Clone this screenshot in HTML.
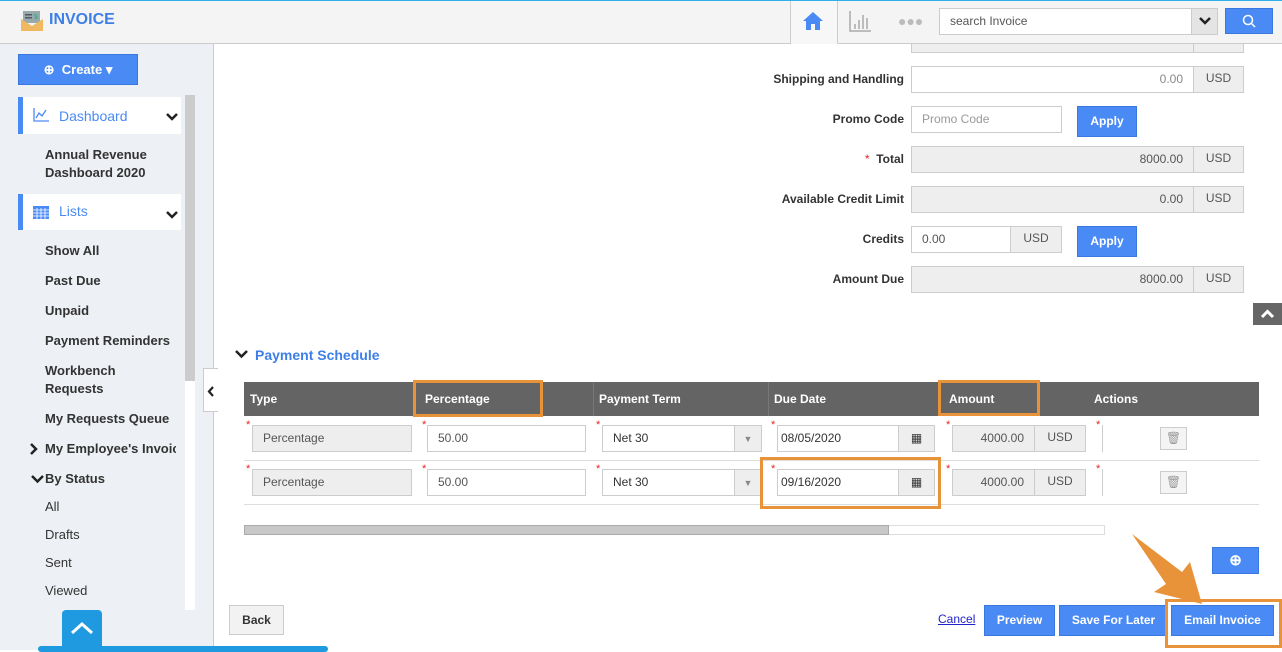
<!DOCTYPE html>
<html><head><meta charset="utf-8"><style>
*{box-sizing:border-box;margin:0;padding:0}
body{width:1282px;height:650px;overflow:hidden;position:relative;background:#fff;font-family:"Liberation Sans",Arial,sans-serif;font-size:13px;color:#333}
.a{position:absolute}
.lbl{position:absolute;right:378px;font-weight:bold;font-size:12px;color:#333;text-align:right}
.inp{position:absolute;border:1px solid #ccc;background:#fff;height:27px;font-size:12px;color:#555;line-height:25px;padding:0 10px}
.ro{background:#eee}
.add{position:absolute;border:1px solid #ccc;background:#eee;height:27px;font-size:12px;color:#555;line-height:23px;text-align:center}
.btn{position:absolute;background:#4a8af4;border:1px solid #3a78e0;color:#fff;font-weight:bold;font-size:12px;text-align:center}
.nav{position:absolute;left:45px;font-weight:bold;font-size:13px;color:#333}
.nav2{position:absolute;left:45px;font-size:13px;color:#333}
.th{position:absolute;top:391px;color:#fff;font-weight:bold;font-size:12px}
.star{position:absolute;color:#e22;font-size:11px}
.ob{position:absolute;border:3px solid #e8923a}
</style></head><body>
<!-- form top partial -->
<div class="inp ro" style="left:911px;top:40px;width:283px;height:13px;border-top:none"></div>
<div class="add" style="left:1193px;top:40px;width:51px;height:13px;border-top:none"></div>
<!-- top bar -->
<div class="a" style="left:0;top:0;width:1282px;height:44px;background:#f4f4f4;border-top:1px solid #2eb0e8;border-bottom:1px solid #ccc"></div>
<svg class="a" style="left:21px;top:10px" width="22" height="22" viewBox="0 0 22 22"><rect x="2" y="1" width="17" height="12" fill="#9aa"/><rect x="4" y="4" width="7" height="1.5" fill="#556"/><rect x="4" y="7" width="7" height="1.5" fill="#556"/><text x="13" y="9" font-size="7" fill="#2a8">$</text><path d="M0 9 L11 16 L22 9 V21 H0Z" fill="#f0b860"/></svg>
<div class="a" style="left:49px;top:11px;font-size:16px;font-weight:bold;color:#3d7fe6">INVOICE</div>
<div class="a" style="left:790px;top:1px;width:48px;height:43px;border-left:1px solid #ccc;border-right:1px solid #ccc;background:#f7f7f7"></div>
<svg class="a" style="left:802px;top:10px" width="22" height="22" viewBox="0 0 22 22"><path d="M11 2 L1 11 H4 V20 H9 V14 H13 V20 H18 V11 H21Z" fill="#4a8af4"/></svg>
<svg class="a" style="left:849px;top:10px" width="22" height="22" viewBox="0 0 22 22" stroke="#aaa" stroke-width="1.5" fill="none"><path d="M1 1V21H22M6 14V19M10 10V19M14 5V19M18 8V19"/></svg>
<div class="a" style="left:898px;top:13px;color:#bbb;font-size:14px;letter-spacing:0px">●●●</div>
<div class="a" style="left:939px;top:8px;width:279px;height:27px;border:1px solid #ccc;background:#fff;font-size:12px;color:#555;line-height:25px;padding-left:10px">search Invoice</div>
<div class="a" style="left:1191px;top:8px;width:27px;height:27px;border:1px solid #ccc;background:#e4e4e4"></div>
<svg class="a" style="left:1199px;top:17px" width="12" height="9" viewBox="0 0 12 9"><path d="M1 1 L6 6 L11 1" stroke="#222" stroke-width="2.5" fill="none"/></svg>
<div class="a" style="left:1225px;top:8px;width:48px;height:26px;background:#4a8af4;border:1px solid #3a78e0"></div>
<svg class="a" style="left:1242px;top:14px" width="14" height="14" viewBox="0 0 14 14" stroke="#fff" stroke-width="1.5" fill="none"><circle cx="6" cy="6" r="4.5"/><path d="M9 9L13 13"/></svg>
<!-- sidebar -->
<div class="a" style="left:0;top:44px;width:214px;height:606px;background:#edf0f4;border-right:1px solid #ccc"></div>
<div class="btn" style="left:18px;top:54px;width:120px;height:31px;line-height:29px;font-size:13px">⊕&nbsp; Create ▾</div>
<div class="a" style="left:185px;top:95px;width:10px;height:515px;background:#fff"></div>
<div class="a" style="left:185px;top:95px;width:10px;height:286px;background:#ccc"></div>
<div class="a" style="left:18px;top:97px;width:163px;height:37px;background:#fff;border-left:5px solid #4a8af4"></div>
<svg class="a" style="left:33px;top:108px" width="16" height="14" viewBox="0 0 16 14" stroke="#4a8af4" fill="none" stroke-width="1.3"><path d="M1 0V13H16M3 10L6 5L9 8L13 2"/></svg>
<div class="a" style="left:59px;top:108px;color:#4a8af4;font-size:14px">Dashboard</div>
<svg class="a" style="left:166px;top:113px" width="12" height="9" viewBox="0 0 12 9"><path d="M1 1 L6 6 L11 1" stroke="#222" stroke-width="2.5" fill="none"/></svg>
<div class="nav" style="top:146px;line-height:18px">Annual Revenue<br>Dashboard 2020</div>
<div class="a" style="left:18px;top:194px;width:163px;height:36px;background:#fff;border-left:5px solid #4a8af4"></div>
<svg class="a" style="left:33px;top:206px" width="16" height="13" viewBox="0 0 16 13"><rect width="16" height="13" fill="#4a8af4"/><path d="M0 4H16M0 7H16M0 10H16M4 2V13M8 2V13M12 2V13" stroke="#fff" stroke-width=".8"/></svg>
<div class="a" style="left:59px;top:203px;color:#4a8af4;font-size:14px">Lists</div>
<svg class="a" style="left:166px;top:211px" width="12" height="9" viewBox="0 0 12 9"><path d="M1 1 L6 6 L11 1" stroke="#222" stroke-width="2.5" fill="none"/></svg>
<div class="nav" style="top:243px">Show All</div>
<div class="nav" style="top:273px">Past Due</div>
<div class="nav" style="top:303px">Unpaid</div>
<div class="nav" style="top:333px">Payment Reminders</div>
<div class="nav" style="top:362px;line-height:18px">Workbench<br>Requests</div>
<div class="nav" style="top:411px">My Requests Queue</div>
<div class="nav" style="top:441px;width:131px;overflow:hidden;white-space:nowrap">My Employee's Invoices</div>
<svg class="a" style="left:30px;top:443px" width="9" height="12" viewBox="0 0 9 12"><path d="M1 1 L6 6 L1 11" stroke="#222" stroke-width="2.5" fill="none"/></svg>
<div class="nav" style="top:471px">By Status</div>
<svg class="a" style="left:31px;top:475px" width="13" height="9" viewBox="0 0 13 9"><path d="M1 1 L6.5 6.5 L12 1" stroke="#222" stroke-width="2.5" fill="none"/></svg>
<div class="nav2" style="top:499px">All</div>
<div class="nav2" style="top:527px">Drafts</div>
<div class="nav2" style="top:555px">Sent</div>
<div class="nav2" style="top:583px">Viewed</div>
<div class="a" style="left:62px;top:610px;width:40px;height:40px;background:#1f9ae0;border-radius:4px 4px 0 0"></div>
<svg class="a" style="left:70px;top:621px" width="24" height="14" viewBox="0 0 24 14"><path d="M2 12 L12 3 L22 12" stroke="#fff" stroke-width="3" fill="none"/></svg>
<div class="a" style="left:38px;top:646px;width:290px;height:6px;background:#1f9ae0;border-radius:4px"></div>
<div class="a" style="left:203px;top:368px;width:15px;height:44px;background:#fff;border:1px solid #ccc;border-right:none"></div>
<svg class="a" style="left:207px;top:386px" width="8" height="11" viewBox="0 0 8 11"><path d="M6 1 L2 5.5 L6 10" stroke="#222" stroke-width="2.2" fill="none"/></svg>
<!-- form -->
<div class="lbl" style="top:72px">Shipping and Handling</div>
<div class="inp" style="left:911px;top:66px;width:283px;text-align:right;color:#888">0.00</div>
<div class="add" style="left:1193px;top:66px;width:51px">USD</div>
<div class="lbl" style="top:112px">Promo Code</div>
<div class="inp" style="left:911px;top:106px;width:151px;color:#999">Promo Code</div>
<div class="btn" style="left:1077px;top:106px;width:60px;height:31px;line-height:29px">Apply</div>
<div class="lbl" style="top:152px"><span style="color:#e22;font-weight:normal">*</span>&nbsp; Total</div>
<div class="inp ro" style="left:911px;top:146px;width:283px;text-align:right">8000.00</div>
<div class="add" style="left:1193px;top:146px;width:51px">USD</div>
<div class="lbl" style="top:192px">Available Credit Limit</div>
<div class="inp ro" style="left:911px;top:186px;width:283px;text-align:right">0.00</div>
<div class="add" style="left:1193px;top:186px;width:51px">USD</div>
<div class="lbl" style="top:232px">Credits</div>
<div class="inp" style="left:911px;top:226px;width:100px">0.00</div>
<div class="add" style="left:1010px;top:226px;width:52px">USD</div>
<div class="btn" style="left:1077px;top:226px;width:60px;height:31px;line-height:29px">Apply</div>
<div class="lbl" style="top:272px">Amount Due</div>
<div class="inp ro" style="left:911px;top:266px;width:283px;text-align:right">8000.00</div>
<div class="add" style="left:1193px;top:266px;width:51px">USD</div>
<div class="a" style="left:1253px;top:303px;width:29px;height:22px;background:#666"></div>
<svg class="a" style="left:1260px;top:309px" width="15" height="10" viewBox="0 0 15 10"><path d="M2 8 L7.5 2.5 L13 8" stroke="#fff" stroke-width="3" fill="none"/></svg>
<!-- payment schedule -->
<svg class="a" style="left:235px;top:350px" width="13" height="9" viewBox="0 0 13 9"><path d="M1 1 L6.5 6.5 L12 1" stroke="#222" stroke-width="2.5" fill="none"/></svg>
<div class="a" style="left:255px;top:347px;font-size:14px;font-weight:bold;color:#3d7fe6">Payment Schedule</div>
<div class="a" style="left:244px;top:382px;width:1015px;height:34px;background:#646464"></div>
<div class="a" style="left:593px;top:382px;width:1px;height:34px;background:#777"></div>
<div class="a" style="left:768px;top:382px;width:1px;height:34px;background:#777"></div>
<div class="th" style="left:250px;top:392px">Type</div>
<div class="th" style="left:425px;top:392px">Percentage</div>
<div class="th" style="left:599px;top:392px">Payment Term</div>
<div class="th" style="left:774px;top:392px">Due Date</div>
<div class="th" style="left:949px;top:392px">Amount</div>
<div class="th" style="left:1094px;top:392px">Actions</div>
<div class="a" style="left:244px;top:460px;width:1015px;height:1px;background:#ddd"></div>
<div class="a" style="left:244px;top:504px;width:1015px;height:1px;background:#ddd"></div>

<div class="star" style="left:246px;top:419px">*</div><div class="inp ro" style="left:252px;top:425px;width:160px">Percentage</div>
<div class="star" style="left:422px;top:419px">*</div><div class="inp" style="left:427px;top:425px;width:159px">50.00</div>
<div class="star" style="left:596px;top:419px">*</div><div class="inp" style="left:602px;top:425px;width:160px;color:#333">Net 30</div><div class="add" style="left:734px;top:425px;width:28px;font-size:9px;color:#888;line-height:26px">▼</div>
<div class="star" style="left:771px;top:419px">*</div><div class="inp" style="left:777px;top:425px;width:123px;padding-left:3px;color:#333">08/05/2020</div><div class="add" style="left:898px;top:425px;width:37px;line-height:25px;font-size:12px;color:#333">▦</div>
<div class="star" style="left:946px;top:419px">*</div><div class="inp ro" style="left:952px;top:425px;width:83px;text-align:right">4000.00</div><div class="add" style="left:1034px;top:425px;width:52px">USD</div>
<div class="star" style="left:1096px;top:419px">*</div><div class="a" style="left:1102px;top:425px;width:2px;height:27px;border-left:1px solid #ccc"></div>
<div class="add" style="left:1160px;top:427px;width:27px;height:23px;line-height:21px;color:#999;background:#f4f4f4">🗑</div>

<div class="star" style="left:246px;top:463px">*</div><div class="inp ro" style="left:252px;top:469px;width:160px">Percentage</div>
<div class="star" style="left:422px;top:463px">*</div><div class="inp" style="left:427px;top:469px;width:159px">50.00</div>
<div class="star" style="left:596px;top:463px">*</div><div class="inp" style="left:602px;top:469px;width:160px;color:#333">Net 30</div><div class="add" style="left:734px;top:469px;width:28px;font-size:9px;color:#888;line-height:26px">▼</div>
<div class="star" style="left:771px;top:463px">*</div><div class="inp" style="left:777px;top:469px;width:123px;padding-left:3px;color:#333">09/16/2020</div><div class="add" style="left:898px;top:469px;width:37px;line-height:25px;font-size:12px;color:#333">▦</div>
<div class="star" style="left:946px;top:463px">*</div><div class="inp ro" style="left:952px;top:469px;width:83px;text-align:right">4000.00</div><div class="add" style="left:1034px;top:469px;width:52px">USD</div>
<div class="star" style="left:1096px;top:463px">*</div><div class="a" style="left:1102px;top:469px;width:2px;height:27px;border-left:1px solid #ccc"></div>
<div class="add" style="left:1160px;top:471px;width:27px;height:23px;line-height:21px;color:#999;background:#f4f4f4">🗑</div>

<div class="a" style="left:244px;top:525px;width:861px;height:10px;border:1px solid #ddd;background:#fff"></div>
<div class="a" style="left:244px;top:525px;width:645px;height:10px;background:#c8c8c8;border:1px solid #aaa"></div>
<div class="btn" style="left:1212px;top:547px;width:47px;height:27px;line-height:25px;font-size:15px">⊕</div>
<!-- annotations -->
<div class="ob" style="left:413px;top:380px;width:130px;height:37px"></div>
<div class="ob" style="left:938px;top:380px;width:102px;height:36px"></div>
<div class="ob" style="left:760px;top:457px;width:181px;height:52px"></div>
<svg class="a" style="left:1130px;top:532px" width="80" height="75" viewBox="0 0 80 75"><path d="M2 2 L52 40 L60 30 L72 72 L24 60 L36 52 Z" fill="#e8923a"/></svg>
<!-- bottom buttons -->
<div class="a" style="left:229px;top:605px;width:55px;height:30px;border:1px solid #ccc;background:#f2f2f2;font-weight:bold;font-size:12px;text-align:center;line-height:28px;color:#333">Back</div>
<div class="a" style="left:938px;top:612px;font-size:12px;color:#2222cc;text-decoration:underline">Cancel</div>
<div class="btn" style="left:984px;top:605px;width:71px;height:31px;line-height:29px">Preview</div>
<div class="btn" style="left:1059px;top:605px;width:109px;height:31px;line-height:29px">Save For Later</div>
<div class="btn" style="left:1171px;top:605px;width:103px;height:31px;line-height:29px">Email Invoice</div>
<div class="ob" style="left:1165px;top:599px;width:117px;height:49px"></div>
</body></html>
